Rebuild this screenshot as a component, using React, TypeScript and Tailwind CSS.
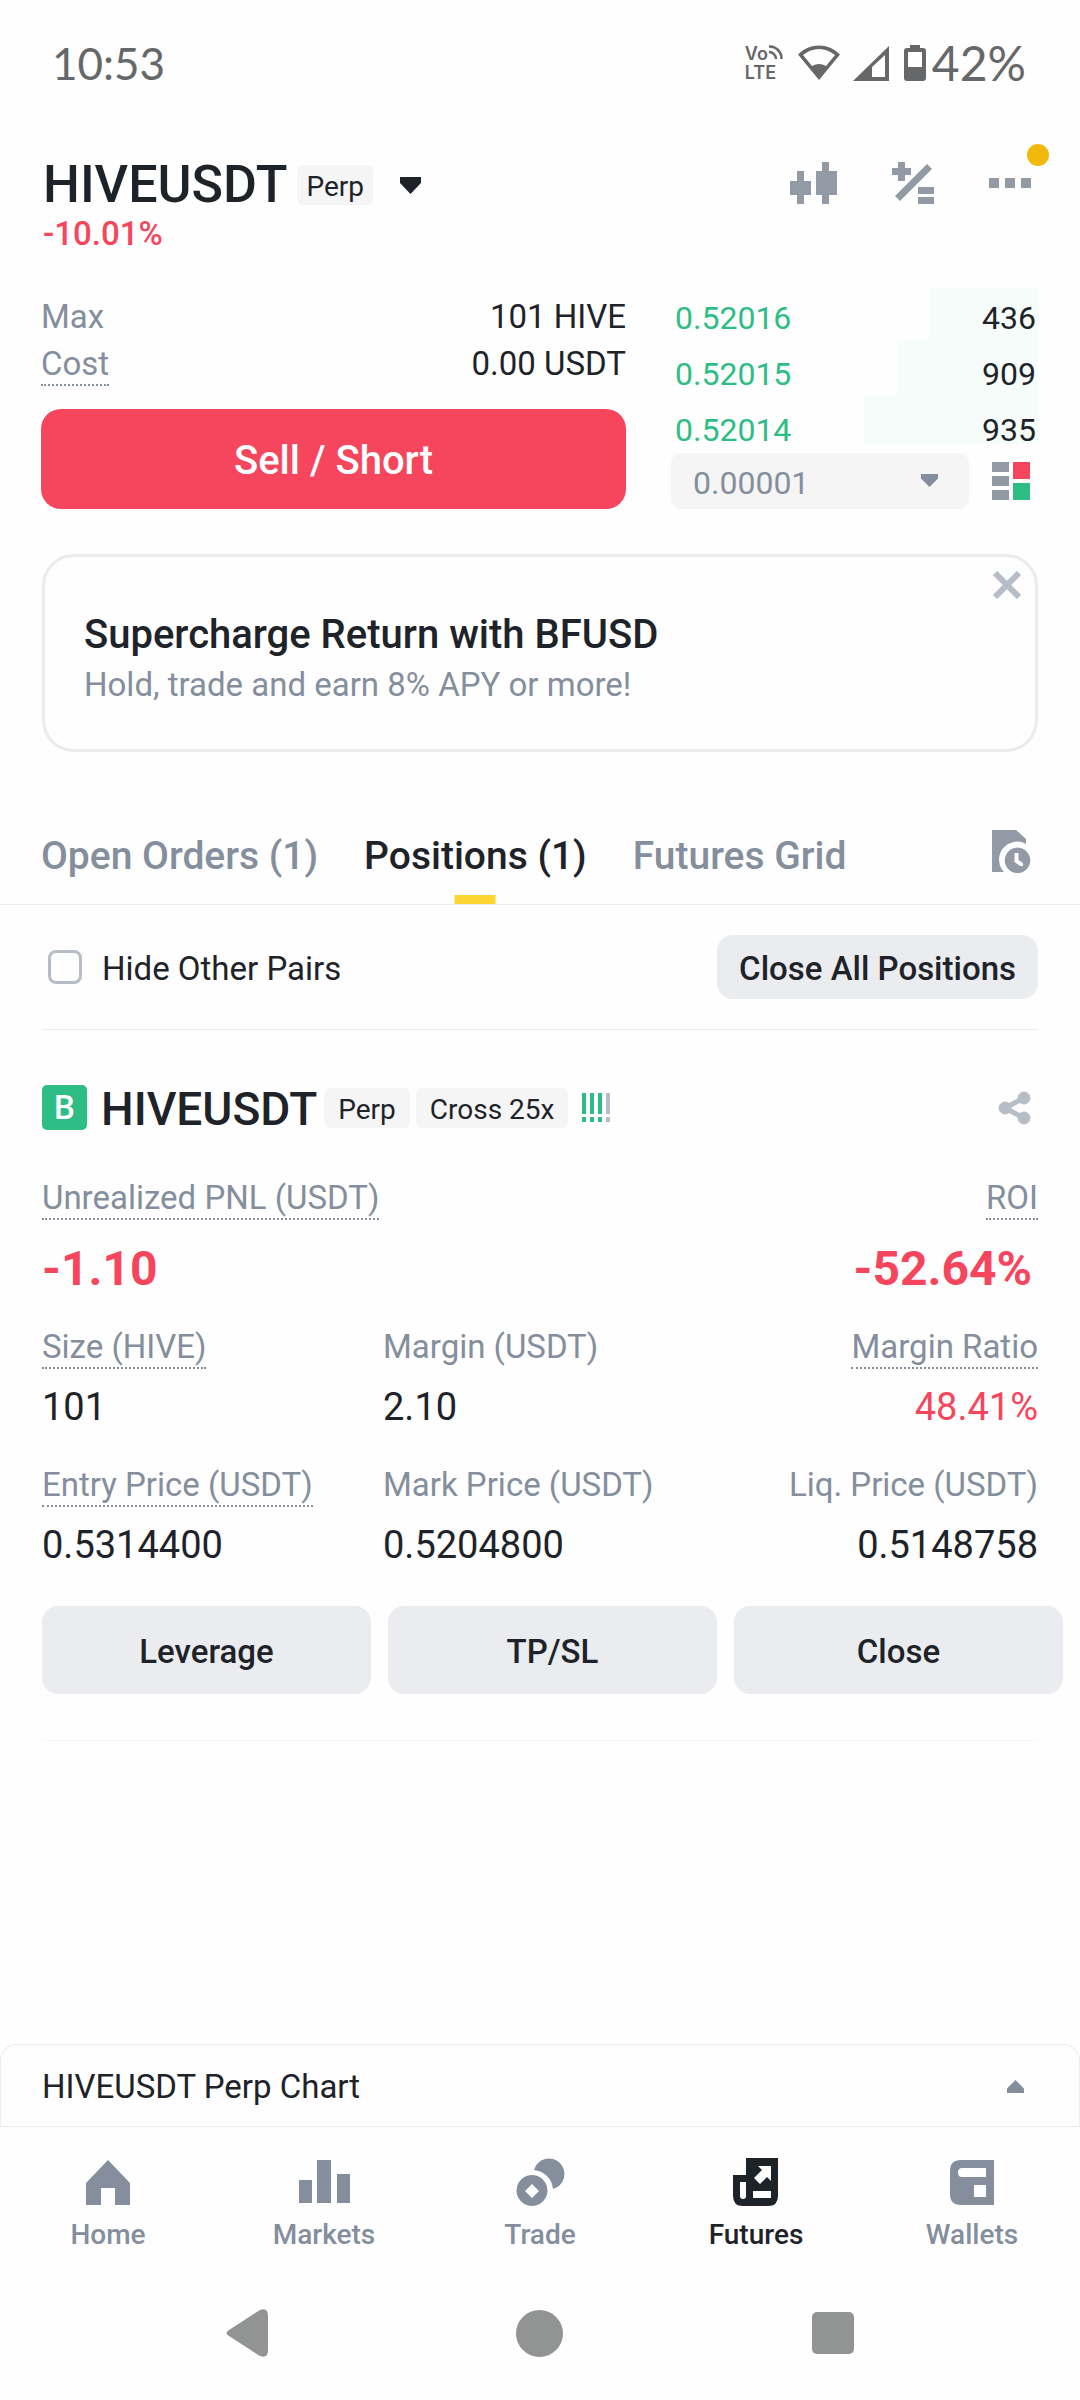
import type { ReactNode } from "react";

const orderBook = [
  { price: "0.52016", amount: "436", depth: 30 },
  { price: "0.52015", amount: "909", depth: 38.5 },
  { price: "0.52014", amount: "935", depth: 47.5 },
];

const tabs = ["Open Orders (1)", "Positions (1)", "Futures Grid"];

function StatusBar() {
  return (
    <div className="flex h-[126px] items-center justify-between pr-[54px] pl-[52px] font-['Lato',sans-serif] text-[44px] text-[#666769]">
      <span>10:53</span>
      <div className="flex items-center">
        <div className="relative mr-[15px] flex w-[38px] flex-col font-['Inter',sans-serif] text-[18px] leading-[19px] font-semibold">
          <span>Vo</span>
          <span>LTE</span>
          <svg className="absolute top-0 right-0 h-[17px] w-[15px]" viewBox="0 0 15 17" fill="none" stroke="currentColor" strokeWidth="2.500">
            <path d="M1 2.500A12 12 0 0 1 13.500 15M1 8a7 7 0 0 1 7 7" />
          </svg>
        </div>
        <svg className="mr-[13px] h-[36px] w-[42px]" viewBox="0 0 42 36" fill="currentColor">
          <path fillRule="evenodd" d="M0 9.500C12 -2.500 30 -2.500 42 9.500L21 35ZM5 10L14 21Q21 17 28 21L37 10C27 2 15 2 5 10Z" />
        </svg>
        <svg className="mr-[15px] h-[36px] w-[36px]" viewBox="0 0 36 36" fill="currentColor">
          <path fillRule="evenodd" d="M0 36L36 1V36ZM19 32H32V10L19 22Z" />
        </svg>
        <svg className="mr-[6px] h-[36px] w-[22px]" viewBox="0 0 22 36" fill="currentColor">
          <path fillRule="evenodd" d="M6 0H16V3H19Q22 3 22 6V33Q22 36 19 36H3Q0 36 0 33V6Q0 3 3 3H6ZM4 7V22H18V7Z" />
        </svg>
        <span className="text-[48px] leading-[52px]">42%</span>
      </div>
    </div>
  );
}

function Badge({ children, className = "" }: { children: ReactNode; className?: string }) {
  return (
    <span className={`rounded-md bg-[#f5f5f5] pt-1 text-[28px] leading-9 text-[#1e2329] ${className}`}>
      {children}
    </span>
  );
}

function Caret({ className = "" }: { className?: string }) {
  return (
    <svg className={className} viewBox="0 0 21 17" fill="currentColor" preserveAspectRatio="none">
      <path d="M0 0H21V6L10.500 17L0 6Z" />
    </svg>
  );
}

function Header() {
  return (
    <header className="flex items-start justify-between px-[43px] pt-[30px]">
      <div>
        <div className="flex items-center">
          <h1 className="text-[52px] leading-[58px] font-medium">HIVEUSDT</h1>
          <Badge className="ml-[10px] px-[9px]">Perp</Badge>
          <button type="button" aria-label="Change pair" className="ml-[27px]">
            <Caret className="h-[17px] w-[21px]" />
          </button>
        </div>
        <p className="text-[33px] leading-10 font-medium text-[#f6465d]">-10.01%</p>
      </div>
      <div className="flex items-center gap-[55px] pt-[6px] pr-[6px] text-[#929aa5]">
        <button type="button" aria-label="Chart">
          <svg className="h-[42px] w-[47px]" viewBox="0 0 47 42" fill="currentColor">
            <path d="M7 9h7v10h7v14h-7v9H7v-9H0V19h7zM32 0h7v9h8v24h-8v9h-7v-9h-6V9h6z" />
          </svg>
        </button>
        <button type="button" aria-label="Calculator">
          <svg className="h-[42px] w-[42px]" viewBox="0 0 42 42" fill="currentColor">
            <path d="M6 0h7v6h6v7h-6v6H6v-6H0V6h6zM35 2l5 5L8 39l-5-5zM26 25h16v7H26zM26 35h16v7H26z" />
          </svg>
        </button>
        <button type="button" aria-label="More" className="relative">
          <svg className="h-[42px] w-[42px]" viewBox="0 0 42 42" fill="currentColor">
            <path d="M0 16h10v10H0zM16 16h10v10H16zM32 16h10v10H32z" />
          </svg>
          <span className="absolute -top-[18px] -right-[18px] size-[22px] rounded-full bg-[#f0b90b]" />
        </button>
      </div>
    </header>
  );
}

function TradePanel() {
  return (
    <section className="mt-[34px] grid grid-cols-[585fr_368fr] gap-x-[45px] px-[41px]">
      <div className="flex flex-col pt-[9px] text-[33px] leading-10">
        <div className="flex items-baseline justify-between">
          <span className="text-[#848e9c]">Max</span>
          <span>101 HIVE</span>
        </div>
        <div className="mt-[7px] flex items-baseline justify-between">
          <span className="border-b-2 border-dotted border-[#848e9c] text-[#848e9c]">Cost</span>
          <span>0.00 USDT</span>
        </div>
        <button type="button" className="mt-[23px] h-[100px] rounded-[20px] bg-[#f6465d] pt-1 text-[40px] font-medium text-white">
          Sell / Short
        </button>
      </div>
      <div className="text-[32px]">
        <table className="w-full leading-7">
          <tbody>
            {orderBook.map((row) => (
              <tr
                key={row.price}
                className="h-14 align-bottom first:h-[52px] last:h-12 [&:last-child>td]:pb-0"
                style={{ background: `linear-gradient(to left, #f5fcf9 ${row.depth}%, transparent ${row.depth}%)` }}
              >
                <td className="pb-2 pl-1 text-[#2ebd85]">{row.price}</td>
                <td className="pr-[3px] pb-2 text-right">{row.amount}</td>
              </tr>
            ))}
          </tbody>
        </table>
        <div className="mt-[9px] flex items-center pr-[9px]">
          <div className="relative flex-1 text-[#848e9c]">
            <select aria-label="Price precision" className="h-14 w-full appearance-none rounded-[10px] bg-[#f5f5f5] pt-1 pl-[22px]">
              <option>0.00001</option>
            </select>
            <Caret className="pointer-events-none absolute top-[21px] right-[31px] h-[13px] w-[17px]" />
          </div>
          <button type="button" aria-label="Order book layout" className="ml-[23px]">
            <svg className="size-[38px]" viewBox="0 0 38 38">
              <path fill="#929aa5" d="M0 0h17v10H0zM0 14h17v10H0zM0 28h17v10H0z" />
              <path fill="#f6465d" d="M21 0h17v17H21z" />
              <path fill="#2ebd85" d="M21 21h17v17H21z" />
            </svg>
          </button>
        </div>
      </div>
    </section>
  );
}

function Banner() {
  return (
    <section className="relative mx-[42px] mt-[45px] rounded-[32px] border-3 border-[#eaecef] px-[39px] pt-[52px] pb-[44px]">
      <h2 className="text-[40px] leading-[52px] font-medium">Supercharge Return with BFUSD</h2>
      <p className="mt-1 text-[33px] leading-10 text-[#848e9c]">Hold, trade and earn 8% APY or more!</p>
      <button type="button" aria-label="Dismiss" className="absolute top-[14px] right-[14px]">
        <svg className="size-[28px]" viewBox="0 0 28 28" stroke="#b7bdc6" strokeWidth="6">
          <path d="M2 2L26 26M26 2L2 26" />
        </svg>
      </button>
    </section>
  );
}

function Tabs() {
  return (
    <nav className="mt-[73px] flex items-start border-b border-[#eaecef] pr-[49px] pl-[41px]">
      <div className="flex flex-1 gap-[46px]">
        {tabs.map((tab) => (
          <button
            key={tab}
            type="button"
            className={`relative pt-[5px] pb-[22px] text-[39px] leading-[52px] font-medium ${tab === "Positions (1)" ? "text-[#1e2329]" : "text-[#848e9c]"}`}
          >
            {tab}
            {tab === "Positions (1)" && (
              <span className="absolute bottom-0 left-1/2 h-[9px] w-[41px] -translate-x-1/2 bg-[#fcd535]" />
            )}
          </button>
        ))}
      </div>
      <button type="button" aria-label="Order history" className="pt-[5px] text-[#929aa5]">
        <svg className="h-[43px] w-[39px]" viewBox="0 0 39 43" fill="currentColor">
          <path d="M0 0H24L34 9V14A18 18 0 0 0 12 42H0Z" />
          <path fillRule="evenodd" d="M25.500 17.500a12.800 12.800 0 1 0 .01 0ZM22.500 23h4v7l4.500 3v3h-3l-5.500-4z" />
        </svg>
      </button>
    </nav>
  );
}

function Metric({
  label,
  value,
  hint = false,
  alignRight = false,
  valueColor = "",
}: {
  label: string;
  value: string;
  hint?: boolean;
  alignRight?: boolean;
  valueColor?: string;
}) {
  return (
    <div className={`flex flex-col ${alignRight ? "items-end" : "items-start"}`}>
      <dt className={`border-b-2 border-dotted text-[33px] leading-10 text-[#848e9c] ${hint ? "border-[#848e9c]" : "border-transparent"}`}>
        {label}
      </dt>
      <dd className={`mt-[14px] text-[38px] leading-[48px] ${valueColor}`}>{value}</dd>
    </div>
  );
}

function Position() {
  return (
    <section className="px-[42px] pt-[55px]">
      <div className="flex items-center">
        <span className="flex size-[45px] items-center justify-center rounded-[5px] bg-[#2ebd85] text-[33px] font-medium text-white">
          B
        </span>
        <h2 className="ml-[14px] pt-1 text-[46px] leading-[41px] font-medium">HIVEUSDT</h2>
        <Badge className="ml-[7px] px-[14px]">Perp</Badge>
        <Badge className="ml-[6px] px-[14px]">Cross 25x</Badge>
        <svg className="ml-[14px] h-[29px] w-[28px]" viewBox="0 0 28 29">
          <path fill="#2ebd85" d="M0 0h4v21H0zM8 0h4v21H8zM16 0h4v21h-4zM0 24h4v5H0zM8 24h4v5H8zM16 24h4v5h-4z" />
          <path fill="#b7bdc6" d="M24 0h4v21h-4zM24 24h4v5h-4z" />
        </svg>
        <button type="button" aria-label="Share" className="mr-[7px] ml-auto">
          <svg className="h-[34px] w-[33px]" viewBox="0 0 33 34" fill="#b7bdc6" stroke="#b7bdc6">
            <path fill="none" strokeWidth="5" d="M26 7L7 17L26 27" />
            <circle cx="7" cy="17" r="6" />
            <circle cx="26" cy="7" r="6" />
            <circle cx="26" cy="27" r="6" />
          </svg>
        </button>
      </div>

      <dl className="mt-12 flex justify-between">
        <div className="flex flex-col items-start">
          <dt className="border-b-2 border-dotted border-[#848e9c] text-[33px] leading-10 text-[#848e9c]">Unrealized PNL (USDT)</dt>
          <dd className="mt-[19px] text-[48px] leading-[60px] font-bold text-[#f6465d]">-1.10</dd>
        </div>
        <div className="flex flex-col items-end">
          <dt className="border-b-2 border-dotted border-[#848e9c] text-[33px] leading-10 text-[#848e9c]">ROI</dt>
          <dd className="mt-[19px] pr-[6px] text-[48px] leading-[60px] font-bold text-[#f6465d]">-52.64%</dd>
        </div>
      </dl>

      <dl className="mt-7 grid grid-cols-[341fr_341fr_314fr] gap-y-[34px]">
        <Metric label="Size (HIVE)" value="101" hint />
        <Metric label="Margin (USDT)" value="2.10" />
        <Metric label="Margin Ratio" value="48.41%" hint alignRight valueColor="text-[#f6465d]" />
        <Metric label="Entry Price (USDT)" value="0.5314400" hint />
        <Metric label="Mark Price (USDT)" value="0.5204800" />
        <Metric label="Liq. Price (USDT)" value="0.5148758" alignRight />
      </dl>

      <div className="mt-[37px] -mr-[25px] grid grid-cols-3 gap-[17px]">
        {["Leverage", "TP/SL", "Close"].map((action) => (
          <button key={action} type="button" className="h-[88px] rounded-2xl bg-[#eaecef] pt-1 text-[33px] font-medium">
            {action}
          </button>
        ))}
      </div>
      <hr className="mt-[46px] border-[#f5f5f5]" />
    </section>
  );
}

const navItems: { label: string; icon: ReactNode; active?: boolean }[] = [
  { label: "Home", icon: <path d="M24 2L46 25V47H31V30H17V47H2V25Z" /> },
  { label: "Markets", icon: <path d="M-1 22H12V45H-1ZM17 2H31V45H17ZM37 16H50V45H37Z" /> },
  {
    label: "Trade",
    icon: (
      <>
        <path fillRule="evenodd" d="M16 17a15.500 15.500 0 1 0 .01 0ZM16 26l7 7-7 7-7-7z" />
        <path d="M18 12A15.500 15.500 0 1 1 37 31A21 21 0 0 0 18 12Z" />
      </>
    ),
  },
  {
    label: "Futures",
    active: true,
    icon: (
      <path
        fillRule="evenodd"
        d="M14 0H46V38Q46 48 36 48H11Q1 48 1 38V17H14ZM26 8L30 12L22 20L28 26L35 19L39 23V8ZM21 33H39V40H21ZM8 24V38Q8 41 11 41Q14 41 14 38V24Z"
      />
    ),
  },
  {
    label: "Wallets",
    icon: (
      <path
        fillRule="evenodd"
        d="M13 2H46V47H13Q2 47 2 36V13Q2 2 13 2ZM14 10Q10 10 10 14.500Q10 19 14 19H38V10ZM26 27V39H38V27Z"
      />
    ),
  },
];

function BottomBar() {
  return (
    <footer className="mt-auto">
      <button type="button" className="flex h-[82px] w-full items-center justify-between rounded-t-[17px] border border-b-0 border-[#eaecef] pt-[2px] pr-[55px] pl-[41px] text-[33px]">
        HIVEUSDT Perp Chart
        <Caret className="h-[13px] w-[17px] rotate-180 text-[#848e9c]" />
      </button>
      <nav className="grid grid-cols-5 border-t border-[#eaecef] pt-[31px]">
        {navItems.map((item) => (
          <a
            key={item.label}
            href="#"
            className={`flex flex-col items-center gap-[11px] text-[28px] leading-9 font-medium ${item.active ? "text-[#1e2329]" : "text-[#848e9c]"}`}
          >
            <svg className="size-12 overflow-visible" viewBox="0 0 48 48" fill="currentColor">
              {item.icon}
            </svg>
            {item.label}
          </a>
        ))}
      </nav>
      <div className="mt-[13px] grid h-[134px] grid-cols-3 place-items-center px-[100px] text-[#929493]">
        <button type="button" aria-label="Back">
          <svg className="h-[48px] w-[42px]" viewBox="0 0 42 48" fill="currentColor">
            <path d="M34 1Q42 -2 42 7V41Q42 50 34 47L3 27Q-2 24 3 21Z" />
          </svg>
        </button>
        <button type="button" aria-label="Home screen" className="size-[47px] rounded-full bg-[#929493]" />
        <button type="button" aria-label="Recent apps" className="size-[42px] rounded-[5px] bg-[#929493]" />
      </div>
    </footer>
  );
}

export default function App() {
  return (
    <div className="flex min-h-screen flex-col bg-[#fefefe] font-['Roboto',sans-serif] text-[#1e2329]">
      <StatusBar />
      <Header />
      <TradePanel />
      <Banner />
      <Tabs />
      <div className="mx-[42px] flex h-[125px] items-center justify-between border-b border-[#eaecef]">
        <label className="flex items-center text-[33px]">
          <input type="checkbox" className="mr-5 ml-[6px] size-[34px] appearance-none rounded-lg border-3 border-[#b7bdc6]" />
          <span className="pt-1">Hide Other Pairs</span>
        </label>
        <button type="button" className="h-16 rounded-2xl bg-[#eaecef] px-[22px] pt-1 text-[33px] font-medium">
          Close All Positions
        </button>
      </div>
      <Position />
      <BottomBar />
    </div>
  );
}
